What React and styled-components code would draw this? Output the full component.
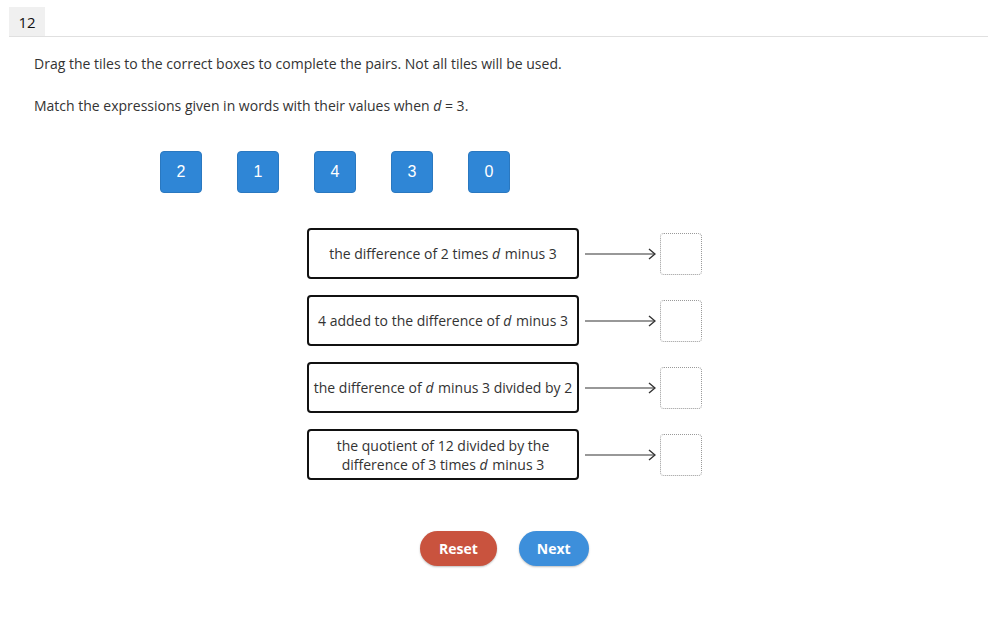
import React from "react";
import styled, { createGlobalStyle } from "styled-components";

const GlobalStyle = createGlobalStyle`
  body {
    margin: 0;
    background: #fff;
    font-family: "Open Sans", "Liberation Sans", sans-serif;
    color: #333;
  }
`;

const tiles = ["2", "1", "4", "3", "0"];

const rows = [
  [<>the difference of 2 times <i>d</i> minus 3</>],
  [<>4 added to the difference of <i>d</i> minus 3</>],
  [<>the difference of <i>d</i> minus 3 divided by 2</>],
  [<>the quotient of 12 divided by the</>, <>difference of 3 times <i>d</i> minus 3</>],
];

const Arrow = () => (
  <svg width="71" height="12" viewBox="0 0 71 12">
    <line x1="0" y1="6" x2="70" y2="6" stroke="#333" strokeWidth="1.2" />
    <polyline points="64,1 70,6 64,11" fill="none" stroke="#333" strokeWidth="1.4" />
  </svg>
);

const App = () => {
  return (
    <Page>
      <GlobalStyle />
      <Header>
        <QuestionNumber>12</QuestionNumber>
      </Header>
      <Body>
        <Instruction>
          Drag the tiles to the correct boxes to complete the pairs. Not all tiles will be used.
        </Instruction>
        <Instruction>
          Match the expressions given in words with their values when <i>d</i> = 3.
        </Instruction>
        <TileBank>
          {tiles.map((t) => (
            <Tile key={t}>{t}</Tile>
          ))}
        </TileBank>
        <Pairs>
          {rows.map((lines, i) => (
            <PairRow key={i}>
              <Expression>
                {lines.map((l, j) => (
                  <span key={j}>{l}</span>
                ))}
              </Expression>
              <Arrow />
              <DropBox />
            </PairRow>
          ))}
        </Pairs>
        <Buttons>
          <ActionButton $bg="#c9533e" $pad="19px">Reset</ActionButton>
          <ActionButton $bg="#3d8fdb" $pad="18px">Next</ActionButton>
        </Buttons>
      </Body>
    </Page>
  );
};

export default App;

const Page = styled.div`
  width: 988px;
  height: 638px;
  padding-top: 7px;
  box-sizing: border-box;
`;

const Header = styled.div`
  margin-left: 9px;
  border-bottom: 1px solid #e0e0e0;
  display: flex;
`;

const QuestionNumber = styled.div`
  width: 36px;
  height: 29px;
  background: #f0f0f0;
  font-size: 15px;
  color: #111;
  display: flex;
  align-items: center;
  justify-content: center;
`;

const Body = styled.div`
  padding-left: 34px;
  padding-top: 17px;
`;

const Instruction = styled.p`
  margin: 0 0 23px;
  font-size: 14px;
  line-height: 19px;
  color: #333;
`;

const TileBank = styled.div`
  display: flex;
  gap: 35px;
  margin-left: 126px;
  margin-top: 36px;
`;

const Tile = styled.div`
  width: 42px;
  height: 42px;
  box-sizing: border-box;
  border-radius: 4px;
  background: #2f86d6;
  border: 1px solid #2a78c0;
  color: #fff;
  font-family: "Liberation Sans", Arial, sans-serif;
  font-size: 16px;
  display: flex;
  align-items: center;
  justify-content: center;
`;

const Pairs = styled.div`
  display: flex;
  flex-direction: column;
  gap: 16px;
  margin-left: 273px;
  margin-top: 35px;
`;

const PairRow = styled.div`
  display: flex;
  align-items: center;
  gap: 4px;
  height: 51px;
  svg {
    margin-left: 2px;
  }
`;

const Expression = styled.div`
  width: 272px;
  height: 51px;
  box-sizing: border-box;
  border: 2px solid #111;
  border-radius: 4px;
  display: flex;
  flex-direction: column;
  align-items: center;
  justify-content: center;
  font-size: 14px;
  line-height: 19px;
  color: #333;
  i {
    margin-right: 1px;
  }
`;

const DropBox = styled.div`
  width: 42px;
  height: 42px;
  box-sizing: border-box;
  border: 1px dotted #999;
  border-radius: 4px;
`;

const Buttons = styled.div`
  display: flex;
  gap: 22px;
  margin-left: 386px;
  margin-top: 51px;
`;

const ActionButton = styled.button`
  height: 35px;
  padding: 0 ${(p) => p.$pad};
  border: none;
  border-radius: 18px;
  background: ${(p) => p.$bg};
  color: #fff;
  font-family: "Open Sans", "Liberation Sans", sans-serif;
  font-weight: 700;
  font-size: 14px;
  box-shadow: 0 1px 2px rgba(0, 0, 0, 0.25);
`;
